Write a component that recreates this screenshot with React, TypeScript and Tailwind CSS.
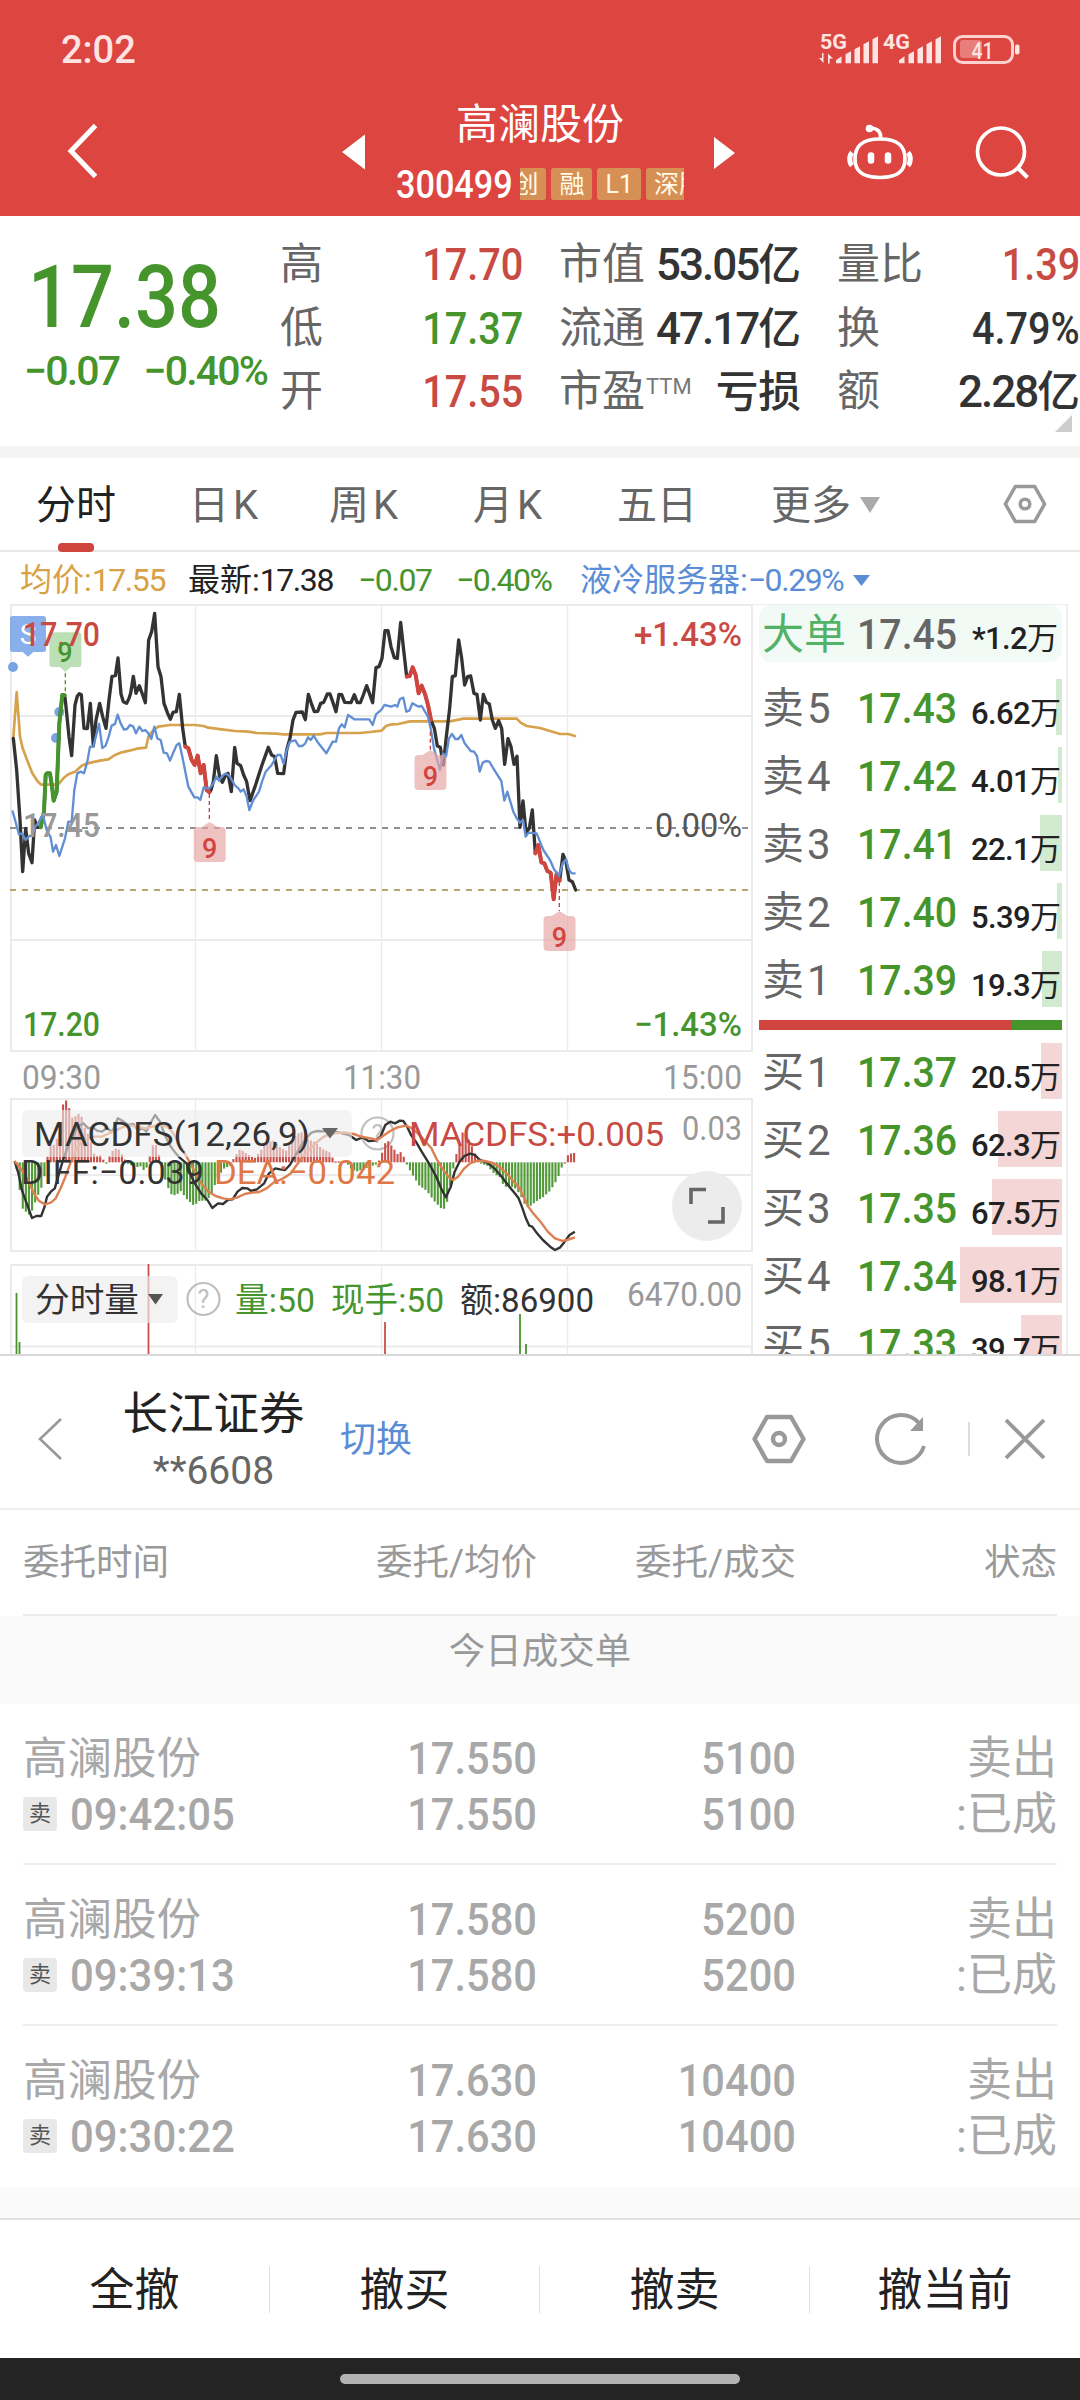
import type { ReactNode } from 'react'

const AXIS = '#ebebeb'
const RED = '#d1453f'
const GREEN = '#46942c'

const stats = [
  [['高', '17.70', 'text-[#c94a43]'], ['市值', '53.05亿', 'text-[#333]'], ['量比', '1.39', 'text-[#c94a43]']],
  [['低', '17.37', 'text-[#46942c]'], ['流通', '47.17亿', 'text-[#333]'], ['换', '4.79%', 'text-[#333]']],
  [['开', '17.55', 'text-[#c94a43]'], ['市盈', '亏损', 'text-[#333]'], ['额', '2.28亿', 'text-[#333]']],
]

const asks = [
  { label: '卖', level: 5, price: '17.43', volume: '6.62', bar: 6 },
  { label: '卖', level: 4, price: '17.42', volume: '4.01', bar: 4 },
  { label: '卖', level: 3, price: '17.41', volume: '22.1', bar: 22 },
  { label: '卖', level: 2, price: '17.40', volume: '5.39', bar: 5 },
  { label: '卖', level: 1, price: '17.39', volume: '19.3', bar: 20 },
]

const bids = [
  { label: '买', level: 1, price: '17.37', volume: '20.5', bar: 21 },
  { label: '买', level: 2, price: '17.36', volume: '62.3', bar: 64 },
  { label: '买', level: 3, price: '17.35', volume: '67.5', bar: 70 },
  { label: '买', level: 4, price: '17.34', volume: '98.1', bar: 102 },
  { label: '买', level: 5, price: '17.33', volume: '39.7', bar: 41 },
]

const orders = [
  { time: '09:42:05', price: '17.550', qty: '5100' },
  { time: '09:39:13', price: '17.580', qty: '5200' },
  { time: '09:30:22', price: '17.630', qty: '10400' },
]

const actions = ['全撤', '撤买', '撤卖', '撤当前']

// Minute chart series, in thirds of a pixel from the top of the pane
const priceLine =
  '40,445 50,540 60,690 68,845 77,715 86,790 96,818 104,690 112,712 122,712 132,665 137,555 141,550 150,550 156,590 161,632 170,605 178,400 187,315 194,316 197,340 207,440 215,497 225,345 232,318 238,311 244,314 252,415 262,416 271,340 280,468 288,390 299,340 308,380 318,415 327,330 336,259 346,257 354,204 363,312 370,335 380,340 387,325 392,310 400,259 408,310 418,287 427,312 436,338 446,150 455,125 464,70 474,230 483,260 492,340 503,370 511,388 519,367 529,365 538,313 548,415 556,470 565,475 575,510 584,525 593,497 602,550 611,525 620,600 628,607 633,600 640,575 649,497 658,555 667,577 675,560 684,550 694,605 704,472 711,520 722,527 731,555 740,575 750,632 765,590 786,525 805,472 815,495 824,500 833,550 851,551 860,480 870,445 879,390 888,367 907,366 916,389 925,313 934,340 943,365 953,364 962,340 971,337 982,312 990,312 998,335 1008,365 1017,313 1025,314 1034,337 1053,338 1063,314 1072,338 1081,338 1090,315 1100,287 1118,338 1128,233 1137,230 1146,205 1155,122 1164,122 1173,170 1183,203 1192,205 1202,97 1211,180 1220,260 1229,258 1238,232 1247,255 1256,310 1265,287 1275,312 1284,345 1293,390 1303,415 1312,468 1321,472 1330,525 1339,440 1349,355 1357,260 1366,257 1376,150 1385,205 1394,285 1403,260 1412,258 1422,310 1431,313 1441,390 1450,313 1459,337 1468,342 1477,390 1486,415 1496,392 1505,415 1514,523 1524,446 1533,470 1542,523 1551,499 1560,712 1569,633 1578,728 1588,715 1597,660 1606,790 1615,765 1624,817 1633,820 1642,843 1652,848 1661,928 1670,850 1679,872 1689,793 1698,815 1707,870 1717,875 1727,900'
const riseLine = '122,712 132,665 137,555 141,550 150,550 156,590 161,632 170,605 178,400 187,315 194,316'
const fallLines = [
  '556,470 565,475 575,510 584,525 593,497 602,550 611,525 620,600 628,607',
  '1220,260 1229,258 1238,232 1247,255 1256,310 1265,287 1275,312 1284,345 1293,390',
  '1606,790 1615,765 1624,817 1633,820 1642,843 1652,848 1661,928 1670,850 1679,872',
]
const averageLine =
  '40,443 50,306 60,440 68,475 85,520 97,550 112,573 123,584 175,583 190,565 205,553 225,545 245,527 262,520 300,512 325,508 345,495 365,487 388,482 410,476 438,473 445,440 460,420 475,410 510,405 585,405 610,408 625,413 665,418 705,423 745,425 770,429 830,431 850,433 960,433 980,429 1080,429 1110,426 1145,422 1158,408 1170,404 1195,402 1230,394 1350,394 1390,386 1550,386 1562,398 1580,408 1620,414 1650,423 1680,432 1705,432 1725,438'
const sectorLine =
  '38,664 57,733 66,730 77,750 87,738 97,738 105,710 115,700 124,680 130,680 140,720 152,742 159,785 168,765 178,798 195,745 205,695 215,695 223,600 232,550 242,545 252,550 262,515 270,470 280,470 297,402 307,474 317,467 326,440 335,407 345,402 353,374 362,400 372,419 381,417 390,405 400,410 408,430 418,410 427,423 436,420 445,430 454,447 463,410 472,445 482,450 491,488 501,490 510,512 519,490 530,465 538,460 547,500 565,590 583,622 593,622 601,630 611,592 628,596 640,580 649,560 657,572 667,557 678,550 690,560 704,585 715,595 722,605 731,598 740,620 748,660 760,630 777,605 786,575 797,545 815,525 832,495 842,495 851,522 860,480 870,455 886,451 896,468 907,468 916,460 924,442 932,450 941,437 952,455 979,490 998,455 1008,455 1017,415 1025,403 1034,412 1044,375 1063,388 1108,388 1118,405 1128,373 1145,358 1153,345 1174,350 1185,345 1192,350 1200,327 1210,323 1219,365 1228,362 1237,340 1256,350 1265,348 1275,365 1284,380 1292,415 1302,475 1320,540 1329,490 1338,500 1347,445 1356,432 1366,447 1375,447 1384,435 1394,460 1412,483 1422,485 1431,498 1439,545 1448,518 1458,513 1468,515 1486,545 1504,573 1513,632 1522,605 1540,665 1550,685 1560,698 1569,690 1577,740 1586,728 1610,730 1630,780 1650,810 1662,838 1678,858 1688,820 1698,808 1707,840 1715,850 1724,850'

const diffLine =
  '30,303 38,340 45,390 55,430 66,474 75,468 85,468 92,440 97,410 105,395 113,385 120,350 130,300 140,260 150,230 160,200 172,190 182,205 192,202 200,212 210,215 220,205 232,215 243,175 255,185 265,195 275,192 285,210 295,205 302,215 310,190 320,165 330,185 340,225 350,255 360,275 370,292 385,310 395,350 402,370 415,400 428,420 438,444 450,430 460,432 470,420 480,418 490,395 500,384 510,385 518,393 530,388 545,370 555,340 568,325 578,328 588,330 598,315 610,285 622,255 632,235 642,218 655,213 668,214 680,212 700,218 720,225 735,240 748,232 760,243 775,242 785,230 795,195 805,185 815,190 825,182 832,183 840,200 848,225 858,245 870,275 885,310 900,350 910,385 920,412 930,380 938,335 948,305 958,288 970,281 980,285 990,300 1005,308 1020,325 1035,350 1048,375 1062,400 1070,415 1078,445 1085,475 1092,497 1098,500 1108,520 1120,540 1135,560 1145,570 1155,563 1165,545 1175,525 1186,515'
const deaLine =
  '30,303 45,330 58,362 70,400 80,422 92,433 105,428 115,415 125,385 135,350 145,310 155,275 165,250 180,235 192,230 210,230 222,222 238,212 255,200 270,196 285,200 300,205 315,200 330,195 345,200 355,215 365,240 375,265 385,290 400,330 415,370 430,395 445,408 460,415 475,418 490,412 505,402 520,398 535,396 550,385 565,367 578,360 590,350 600,340 612,315 625,290 640,265 655,245 670,228 690,220 710,217 730,222 745,230 765,235 778,240 790,228 805,213 820,202 838,197 850,205 862,220 875,240 890,265 900,295 912,325 925,350 935,360 945,350 958,325 970,310 985,302 1000,303 1015,308 1030,320 1045,340 1060,365 1072,385 1080,410 1090,440 1100,460 1115,485 1130,515 1145,535 1160,543 1170,540 1186,532'

// MACD histogram outline: [x, height], one bar a minute is sampled from it
const macdShape = [
  [34, -20], [46, -138], [62, -160], [75, -110], [90, -60], [95, 0], [103, 48], [115, 55], [125, 130], [130, 175],
  [135, 190], [142, 165], [150, 130], [160, 145], [167, 145], [172, 110], [180, 90], [190, 50], [195, 18], [210, 22],
  [215, -2], [222, 0], [228, 30], [242, 45], [255, 15], [262, -3], [280, -15], [290, -12], [300, -30], [305, 0],
  [310, 25], [318, 65], [325, 40], [330, 10], [338, -40], [345, -70], [352, -95], [363, -100], [372, -85], [385, -110],
  [400, -130], [412, -115], [425, -115], [435, -100], [445, -60], [460, -20], [475, -10], [482, 12], [495, 40],
  [510, 25], [525, 12], [535, 30], [550, 60], [565, 65], [578, 45], [590, 35], [600, 60], [612, 85], [622, 90],
  [635, 70], [650, 60], [665, 40], [680, 30], [690, 3], [715, 3], [720, -15], [735, -28], [750, -20], [765, -12],
  [778, -5], [785, 15], [795, 60], [800, 65], [810, 45], [820, 25], [828, 32], [835, 10], [840, -10], [852, -40],
  [865, -70], [880, -85], [895, -115], [905, -130], [914, -145], [922, -120], [930, -60], [936, -10], [940, 20],
  [947, 45], [952, 90], [960, 88], [970, 60], [980, 25], [986, 10], [990, -3], [1005, -10], [1020, -35], [1032, -45],
  [1040, -75], [1052, -70], [1065, -80], [1078, -110], [1085, -135], [1095, -130], [1105, -118], [1120, -105],
  [1135, -85], [1150, -50], [1160, -10], [1165, 0], [1170, 20], [1180, 28], [1190, 28],
]

function macdBars() {
  const bars: { x: number; h: number }[] = []
  for (let x = 34; x < 1190; x += 6.39) {
    const i = macdShape.findIndex(p => p[0] > x)
    const [x0, h0] = macdShape[Math.max(i - 1, 0)]
    const [x1, h1] = macdShape[i]
    bars.push({ x, h: h0 + ((h1 - h0) * (x - x0)) / (x1 - x0) })
  }
  return bars
}

function StatusIcons() {
  return (
    <svg width="206" height="60" viewBox="816 20 206 60" fill="#fde3e2">
      <text x="820" y="48.5" fontSize="21" fontWeight="700" textLength="27" lengthAdjust="spacingAndGlyphs">5G</text>
      <path d="M823.5 53v10l-4.5-5h3v-5zM828 63.5V53.5l5 5h-3.300v5z" />
      <text x="883" y="48.5" fontSize="21" fontWeight="700" textLength="27" lengthAdjust="spacingAndGlyphs">4G</text>
      {[836, 899].map(x => (
        <path key={x} d={`M${x} 63.3v-3l5.5-4v7zM${x + 9.5} 63.3v-9l5.5-3v12zM${x + 18.5} 63.3v-14l5.5-3v17zM${x + 27.5} 63.3v-19l5.5-3v22zM${x + 36.5} 63.3v-24l5.5-3v27z`} />
      ))}
      <rect x="954.5" y="36.5" width="58" height="26" rx="8" fill="none" stroke="#fbd0cf" strokeWidth="3" />
      <rect x="960" y="40" width="22" height="18" rx="3" fill="#e87d7a" />
      <rect x="1015" y="44.5" width="4.5" height="10" rx="2" />
      <text x="971.5" y="58.5" fontSize="24" fontWeight="500" textLength="22" lengthAdjust="spacingAndGlyphs">41</text>
    </svg>
  )
}

function Header() {
  return (
    <header className="h-[216px] bg-[#dd4540] text-white">
      <div className="flex h-[100px] items-center justify-between pl-[61px] pr-[58px]">
        <span className="text-[38px] font-medium leading-none text-[#fde3e2]">2:02</span>
        <StatusIcons />
      </div>
      <div className="flex h-[116px]">
        <svg width="396" height="100" viewBox="0 100 396 100">
          <path d="M95.5 125.5L71 151l24.500 25.500" fill="none" stroke="#fff" strokeWidth="5" />
          <path d="M342 152l23-17.5v35z" fill="#fff" />
        </svg>
        <div className="w-[288px]">
          <div className="flex h-[50px] items-center justify-center text-[42px] leading-none">高澜股份</div>
          <div className="mt-[18px] flex h-8 items-center">
            <span className="w-[124px] shrink-0 pt-[2px] text-[38px] font-medium leading-none">
              <span className="inline-block origin-left scale-x-90">300499</span>
            </span>
            <div className="flex h-8 flex-1 justify-end overflow-hidden text-[25px] text-[#fffbe6]">
              <div className="-mr-7 flex shrink-0 gap-[5px]">
                <Tag>创</Tag>
                <Tag>融</Tag>
                <Tag>L1</Tag>
                <Tag>深股</Tag>
              </div>
            </div>
          </div>
        </div>
        <svg width="396" height="100" viewBox="684 100 396 100" fill="none" stroke="#fff" strokeWidth="3.7">
          <path d="M714 137l21 16-21 16z" fill="#fff" stroke="none" />
          <path d="M880 139c19 0 25 8 25 20s-7 18.500-25 18.500-25-6.500-25-18.500 6-20 25-20z" />
          <path d="M880.500 139c1-7-3-10.500-9-11" />
          <circle cx="869.500" cy="128.500" r="3.800" fill="#fff" stroke="none" />
          <path d="M852 152.500c-3 3-3 10 0 13M908 152.500c3 3 3 10 0 13" strokeWidth="5" />
          <path d="M871 155.500v5M888 155.500v5" strokeWidth="6.5" strokeLinecap="round" />
          <circle cx="1001" cy="151.500" r="23.500" />
          <path d="M1018 168l9.500 9.500" strokeWidth="4" />
        </svg>
      </div>
    </header>
  )
}

function Tag({ children }: { children: ReactNode }) {
  return <span className="flex h-8 min-w-10 items-center justify-center rounded-[3px] bg-[#d69056] px-[8px] leading-none">{children}</span>
}

function Quote() {
  return (
    <section className="relative flex h-[230px] text-[44px] leading-none">
      <div className="w-[280px] font-medium text-[#46942c]">
        <div className="mt-[36px] flex h-[90px] items-center pl-[28px] text-[87px]">
          <span className="inline-block origin-left scale-x-[.87]">17.38</span>
        </div>
        <div className="mt-[8px] flex h-[42px] items-center justify-between pl-[24px] pr-[13px] text-[41px] tracking-[-0.045em]">
          <span>−0.07</span>
          <span>−0.40%</span>
        </div>
      </div>
      <div className="flex flex-1 flex-col pt-[17px]">
        {stats.map((row, r) => (
          <div key={r} className="grid h-[63.7px] grid-cols-[243px_278px_279px] items-center">
            {row.map(([label, value, color], c) => (
              <div key={label} className={c === 0 ? 'flex justify-between' : 'flex justify-between pl-[36px]'}>
                <span className="text-[43px] text-[#666]">
                  {label}
                  {label === '市盈' && <sup className="relative -top-[12px] left-px align-baseline text-[22px] text-[#777]">TTM</sup>}
                </span>
                <span className={color}>
                  <Figure>{value}</Figure>
                </span>
              </div>
            ))}
          </div>
        ))}
      </div>
      <svg className="absolute right-2 bottom-[14px]" width="17" height="17"><path d="M17 0v17H0z" fill="#ccc" /></svg>
    </section>
  )
}

// Digits run narrower than the characters that follow them
function Figure({ children }: { children: string }) {
  const unit = children.replace(/[\d.%]/g, '')
  const digits = children.replace(/[^\d.%]/g, '')
  if (!unit) return <span className="inline-block origin-right scale-x-90 font-medium">{digits}</span>
  return (
    <>
      <span className="font-medium tracking-[-0.045em]">{digits}</span>
      <span className="text-[0.97em] font-medium">{unit}</span>
    </>
  )
}

function Hexagon({ className }: { className: string }) {
  return (
    <svg className={className} viewBox="0 0 54 50" fill="none" stroke="#999" strokeWidth="4.4">
      <path d="M15 3h24l12.500 22L39 47H15L2.500 25z" strokeLinejoin="round" />
      <circle cx="27" cy="25" r="6" />
    </svg>
  )
}

function Tabs() {
  return (
    <nav className="flex h-[94px] items-center border-b-2 border-[#e8e8e8] pl-[36px] text-[40px] leading-none text-[#666]">
      <div className="relative w-[153px] pt-[3px] text-[#222]">
        分时
        <span className="absolute top-[60px] left-[22px] h-[9px] w-9 rounded bg-[#d1453f]" />
      </div>
      <div className="w-[140px] pt-[3px] tracking-[4px]">日K</div>
      <div className="w-[144px] pt-[3px] tracking-[4px]">周K</div>
      <div className="w-[144px] pt-[3px] tracking-[4px]">月K</div>
      <div className="w-[154px] pt-[3px]">五日</div>
      <div className="flex w-[232px] items-center gap-[9px] pt-[3px]">
        更多
        <svg width="20" height="16" className="-mt-[2px]"><path d="M0 0h20L10 16z" fill="#aaa" /></svg>
      </div>
      <Hexagon className="h-[40px] w-[44px]" />
    </nav>
  )
}

function Legend() {
  return (
    <div className="flex h-[52px] items-center pl-[20px] pt-[4px] text-[32px] leading-none">
      <span className="w-[168px] text-[#d9a146]">均价:<Digits>17.55</Digits></span>
      <span className="w-[170px] text-[#222]">最新:<Digits>17.38</Digits></span>
      <span className="w-[98px] text-[#46942c]"><Digits>−0.07</Digits></span>
      <span className="w-[124px] text-[#46942c]"><Digits>−0.40%</Digits></span>
      <span className="text-[#5b8dd6]">液冷服务器:<Digits>−0.29%</Digits></span>
      <svg className="ml-[10px]" width="17" height="11"><path d="M0 0h17L8.500 11z" fill="#5b8dd6" /></svg>
    </div>
  )
}

function Digits({ children }: { children: string }) {
  return <span className="tracking-[-0.045em]">{children}</span>
}

type LabelProps = { x: number; y: number; w: number; size?: number; fill: string; weight?: number; children: string }

function Label({ x, y, w, size = 34, fill, weight = 400, children }: LabelProps) {
  return (
    <text x={x} y={y} fontSize={size} fill={fill} fontWeight={weight} textLength={w} lengthAdjust="spacingAndGlyphs">
      {children}
    </text>
  )
}

function Help({ x, y }: { x: number; y: number }) {
  return (
    <g opacity="0.75">
      <circle cx={x} cy={y} r="16" fill="none" stroke="#aaa" strokeWidth="2.2" />
      <text x={x} y={y + 9} fontSize="25" textAnchor="middle" fill="#aaa">?</text>
    </g>
  )
}

function Nine({ x, y }: { x: number; y: number }) {
  return (
    <g>
      <path d={`M${x - 8} ${y + 5}l8-5 8 5h4q4 0 4 4v27q0 4-4 4h-24q-4 0-4-4v-27q0-4 4-4z`} fill="#e8a5a5" fillOpacity="0.68" />
      <text x={x} y={y + 36} fontSize="27" textAnchor="middle" fill={RED} fontWeight="500">9</text>
    </g>
  )
}

function Charts() {
  return (
    <svg width="753" height="750" viewBox="0 604 753 750" className="shrink-0" fill="none">
      <g stroke={AXIS} strokeWidth="2">
        <path d="M10 605h743M10 716h743M10 940h743M10 1051h743M11 604v448M752 604v448" />
        <path d="M10 1099h743M10 1175h743M10 1251h743M11 1099v153M752 1099v153" />
        <path d="M10 1265h743M10 1346.500h743M11 1265v89M752 1265v89" />
        <path d="M195.500 604v448M381.500 604v448M567.500 604v448M195.500 1099v153M381.500 1099v153M567.500 1099v153M195.500 1265v89M381.500 1265v89M567.500 1265v89" strokeWidth="1.3" />
      </g>
      <path d="M10 828h740" stroke="#8f8f8f" strokeWidth="2" strokeDasharray="6 6" />
      <path d="M10 890h740" stroke="#b8a672" strokeWidth="2" strokeDasharray="6 6" />

      <g transform="translate(0 590) scale(.33333)" strokeLinejoin="round" strokeLinecap="round">
        <path d="M38 78h92q8 0 8 8v92q0 8-8 8h-30l-16 14-16-14H38q-8 0-8-8V86q0-8 8-8z" fill="#7da7e9" fillOpacity="0.9" />
        <circle cx="39" cy="231" r="15" fill="#7aa3e5" />
        <circle cx="178" cy="366" r="15" fill="#7aa3e5" />
        <circle cx="168" cy="444" r="15" fill="#7aa3e5" />
        <polyline points={averageLine} stroke="#d6a24c" strokeWidth="8" />
        <polyline points={priceLine} stroke="#333" strokeWidth="10" />
        <polyline points={riseLine} stroke={GREEN} strokeWidth="12" />
        {fallLines.map(points => (
          <polyline key={points} points={points} stroke={RED} strokeWidth="12" />
        ))}
        <polyline points={sectorLine} stroke="#628fd3" strokeWidth="7" />
        <path d="M156 127h80q8 0 8 8v88q0 8-8 8h-24l-16 15-16-15h-24q-8 0-8-8v-88q0-8 8-8z" fill="#a5d59d" fillOpacity="0.75" />
        <path d="M196 250v65" stroke={GREEN} strokeWidth="4" strokeDasharray="12 9" strokeLinecap="butt" />
        <path d="M628 612v84M1291 425v55M1678 876v87" stroke="#b8494a" strokeWidth="4" strokeDasharray="12 9" strokeLinecap="butt" />
      </g>
      <text x="28" y="644" fontSize="28" fill="#fff" textAnchor="middle">S</text>
      <Label x={23} y={646} w={77} fill="#c94a43" weight={500}>17.70</Label>
      <text x="65" y="662" fontSize="27" fill={GREEN} fontWeight="500" textAnchor="middle">9</text>
      <Nine x={209.7} y={822} />
      <Nine x={430.5} y={750} />
      <Nine x={559.5} y={911} />

      <Label x={23} y={837} w={77} fill="#999" weight={500}>17.45</Label>
      <Label x={23} y={1036} w={77} fill={GREEN} weight={500}>17.20</Label>
      <Label x={634} y={646} w={108} fill="#c94a43" weight={500}>+1.43%</Label>
      <Label x={655} y={837} w={87} fill="#555">0.00%</Label>
      <Label x={634} y={1036} w={108} fill={GREEN} weight={500}>−1.43%</Label>
      <Label x={22} y={1089} w={79} fill="#999">09:30</Label>
      <Label x={343} y={1089} w={78} fill="#999">11:30</Label>
      <Label x={663} y={1089} w={79} fill="#999">15:00</Label>

      <Help x={377.5} y={1133.5} />
      <g transform="translate(0 1060) scale(.4847 .33333)">
        {macdBars().map(({ x, h }) => (
          <rect key={x} x={x - 2} y={h > 0 ? 307 - h : 307} width="4.400" height={Math.max(Math.abs(h), 4)} fill={h > 0 ? '#c9504b' : '#539a3b'} />
        ))}
        <polyline points={diffLine} stroke="#333" strokeWidth="2.4" vectorEffect="non-scaling-stroke" strokeLinejoin="round" />
        <polyline points={deaLine} stroke="#dd7f50" strokeWidth="2.4" vectorEffect="non-scaling-stroke" strokeLinejoin="round" />
      </g>
      <rect x="22" y="1110" width="330" height="47" rx="6" fill="#ececec" fillOpacity="0.6" />
      <Label x={34} y={1146} w={276} fill="#333">MACDFS(12,26,9)</Label>
      <path d="M322 1128h16l-8 10.500z" fill="#666" />
      <Label x={409} y={1146} w={255} fill="#c94a43">MACDFS:+0.005</Label>
      <Label x={682} y={1140} w={60} fill="#999">0.03</Label>
      <Label x={21} y={1184} w={183} fill="#333">DIFF:−0.039</Label>
      <Label x={214} y={1184} w={181} fill="#df7747">DEA:−0.042</Label>
      <circle cx="707" cy="1206" r="35" fill="#ececec" />
      <path d="M691 1204v-14.500h15M723 1207v15h-15" stroke="#666" strokeWidth="3.6" />

      <path d="M16.500 1293v61M19.500 1342v12M520 1314v40M526 1344v10" stroke={GREEN} strokeWidth="1.800" />
      <path d="M148.500 1264v90M385 1322v32" stroke="#c9504b" strokeWidth="1.800" />
      <rect x="22" y="1276" width="155.500" height="47" rx="6" fill="#ececec" fillOpacity="0.65" />
      <Label x={35} y={1312} w={104} fill="#333">分时量</Label>
      <path d="M148 1294h15l-7.500 10.500z" fill="#555" />
      <Help x={203.5} y={1299} />
      <Label x={235} y={1312} w={80} fill={GREEN}>量:50</Label>
      <Label x={331} y={1312} w={113} fill={GREEN}>现手:50</Label>
      <Label x={460} y={1312} w={134} fill="#333">额:86900</Label>
      <Label x={627} y={1306} w={115} fill="#999">6470.00</Label>
    </svg>
  )
}

function Level({ row, bar }: { row: (typeof asks)[number]; bar: string }) {
  return (
    <div className="relative flex h-[68px] items-center pl-[3px] text-[42px] leading-none">
      <div className={`absolute top-[5px] right-0 h-14 ${bar}`} style={{ width: row.bar }} />
      <span className="w-[95px] pt-[2px] text-[#666]">
        {row.label}
        <span className="ml-[3px]">{row.level}</span>
      </span>
      <span className="w-[100px] pt-[2px] font-medium text-[#46942c]">
        <span className="inline-block origin-left scale-x-[.935]">{row.price}</span>
      </span>
      <Volume>{row.volume}</Volume>
    </div>
  )
}

function Volume({ children }: { children: string }) {
  return (
    <span className="relative mt-[10px] mr-px ml-auto text-[31px] whitespace-nowrap text-[#222]">
      <span className="font-medium tracking-[-0.02em]">{children}</span>万
    </span>
  )
}

function OrderBook() {
  return (
    <aside className="h-[750px] w-[315px] overflow-hidden border-t border-r-2 border-[#ededed] pl-[6px] pr-[4px]">
      <div className="flex h-[57px] items-center rounded-xl bg-[#f2faf6] pr-[3px] pl-[3px] text-[42px] leading-none">
        <span className="w-[95px] pt-[2px] text-[#52b267]">大单</span>
        <span className="w-[100px] pt-[2px] font-medium text-[#666]">
          <span className="inline-block origin-left scale-x-[.935]">17.45</span>
        </span>
        <Volume>*1.2</Volume>
      </div>
      <div className="mt-[12px]">
        {asks.map(row => <Level key={row.level} row={row} bar="bg-[#d2ead0]" />)}
      </div>
      <div className="mt-[6px] flex h-[10px]">
        <div className="w-[253px] bg-[#d1453f]" />
        <div className="flex-1 bg-[#46942c]" />
      </div>
      <div className="mt-[8px]">
        {bids.map(row => <Level key={row.level} row={row} bar="bg-[#f4d6d6]" />)}
      </div>
    </aside>
  )
}

function AccountBar() {
  return (
    <div className="flex h-[156px] items-center border-t-2 border-b-2 border-t-[#d8d8d8] border-b-[#eee] pt-[14px]">
      <svg className="ml-[37px]" width="26" height="44" fill="none" stroke="#999" strokeWidth="2.6"><path d="M24 2L3 22l21 20" /></svg>
      <div className="ml-[59px] w-[183px] pt-[5px] text-center leading-none">
        <div className="text-[45.5px] text-[#222]">长江证券</div>
        <div className="mt-[14px] text-[39px] text-[#666]">**6608</div>
      </div>
      <span className="ml-[35px] pt-[2px] text-[36px] leading-none text-[#5b8dd6]">切换</span>
      <Hexagon className="ml-auto h-[50px] w-[54px]" />
      <svg className="ml-[68px]" width="56" height="54" viewBox="0 0 56 54" fill="none" stroke="#999" strokeWidth="4">
        <path d="M50 34A24 24 0 1 1 45 11" />
        <path d="M49 5v14H36z" fill="#999" stroke="none" />
      </svg>
      <div className="ml-[38px] h-[34px] w-[2px] bg-[#ddd]" />
      <svg className="mr-[35px] ml-[35px]" width="40" height="40" stroke="#999" strokeWidth="3.8"><path d="M1 1l38 38M39 1L1 39" /></svg>
    </div>
  )
}

function Orders() {
  return (
    <section className="leading-none">
      <div className="mx-[23px] grid h-[106px] grid-cols-[322px_192px_259px_1fr] items-center border-b-2 border-[#ececec] pt-[3px] text-right text-[36.5px] text-[#999]">
        <span className="text-left">委托时间</span>
        <span>委托/均价</span>
        <span>委托/成交</span>
        <span>状态</span>
      </div>
      <div className="flex h-[88px] items-center justify-center bg-[#fafafa] pb-[15px] text-[36.5px] text-[#999]">今日成交单</div>
      {orders.map((order, i) => (
        <div
          key={order.time}
          className={`mx-[23px] grid h-[161px] grid-cols-[322px_192px_259px_1fr] grid-rows-[56px_56px] items-center pt-[26px] text-right text-[45px] text-[#a8a8a8] ${i < 2 ? 'border-b-2 border-[#ededed]' : ''}`}
        >
          <span className="pt-[2px] text-left text-[44.5px]">高澜股份</span>
          <OrderFigure>{order.price}</OrderFigure>
          <OrderFigure>{order.qty}</OrderFigure>
          <span>卖出</span>
          <span className="flex items-center gap-[13px]">
            <span className="flex size-[34px] items-center justify-center rounded bg-[#e8e8e8] text-[22px] text-[#555]">卖</span>
            <span className="inline-block origin-left scale-x-[.93] font-medium">{order.time}</span>
          </span>
          <OrderFigure>{order.price}</OrderFigure>
          <OrderFigure>{order.qty}</OrderFigure>
          <span>:已成</span>
        </div>
      ))}
    </section>
  )
}

function OrderFigure({ children }: { children: string }) {
  return <span className="inline-block origin-right scale-x-[.925] font-medium">{children}</span>
}

function Footer() {
  return (
    <footer>
      <div className="h-[31px] bg-[#fafafa]" />
      <div className="flex h-[140px] items-center border-t-2 border-[#e0e0e0] text-[45px] leading-none text-[#222]">
        {actions.map((action, i) => (
          <div key={action} className={`flex h-[47px] w-[270px] items-center justify-center pt-[2px] ${i < 3 ? 'border-r border-[#e0e0e0]' : ''}`}>
            {action}
          </div>
        ))}
      </div>
      <div className="flex h-[42px] items-center justify-center bg-[#242424]">
        <div className="h-[10px] w-[400px] rounded-full bg-[#b3b3b3]" />
      </div>
    </footer>
  )
}

export default function App() {
  return (
    <div className="h-[2400px] w-[1080px] overflow-hidden bg-white font-['Roboto','Noto_Sans_CJK_SC',sans-serif]">
      <Header />
      <Quote />
      <div className="h-3 bg-[#f4f4f4]" />
      <Tabs />
      <Legend />
      <div className="flex">
        <Charts />
        <OrderBook />
      </div>
      <AccountBar />
      <Orders />
      <Footer />
    </div>
  )
}
